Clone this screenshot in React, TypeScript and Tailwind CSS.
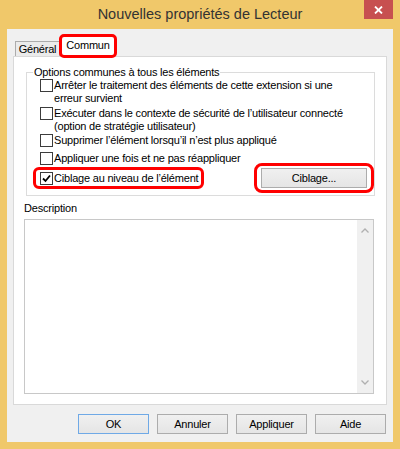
import React from 'react';

function Box({ checked = false }: { checked?: boolean }) {
  return (
    <span className="shrink-0 w-[13px] h-[13px] border border-[#3c3c3c] bg-white flex items-center justify-center">
      {checked && (
        <svg width="9" height="9" viewBox="0 0 9 9">
          <path d="M1 4.5 L3.5 7 L8 1.5" fill="none" stroke="#000" strokeWidth="1.8" />
        </svg>
      )}
    </span>
  );
}

function Btn({ label, primary = false }: { label: string; primary?: boolean }) {
  return (
    <div
      className={
        'w-[71px] h-[20px] flex items-center justify-center bg-gradient-to-b from-[#F0F0F0] to-[#E5E5E5] border ' +
        (primary ? 'border-[#6FA9E6]' : 'border-[#ACACAC]')
      }
    >
      {label}
    </div>
  );
}

export default function App() {
  return (
    <div className="w-[400px] h-[449px] bg-[#F0C86A] flex flex-col font-['Liberation_Sans',sans-serif] text-[11px] tracking-[-0.2px] text-black leading-[13px]">
      {/* title bar */}
      <div className="relative h-[29px] flex items-center justify-center text-[14.5px] tracking-normal text-[#333]">
        Nouvelles propriétés de Lecteur
        <div className="absolute right-[7px] top-0 w-[29px] h-[19px] bg-[#C75050] flex items-center justify-center">
          <svg width="9" height="8" viewBox="0 0 9 8">
            <path d="M1 0.5 L8 7.5 M8 0.5 L1 7.5" stroke="#fff" strokeWidth="1.8" />
          </svg>
        </div>
      </div>

      {/* client area */}
      <div className="mx-[7px] h-[413px] bg-[#F0F0F0] flex flex-col px-[6px] pt-[4px]">
        {/* tabs */}
        <div className="h-[23px] flex items-end pl-[2px]">
          <div className="w-[45px] h-[15px] border border-b-0 border-[#ACACAC] bg-[#EBEBEB] flex items-center justify-center">
            Général
          </div>
          <div className="relative z-10 w-[56px] h-[22px] -mb-[1px] border border-b-0 border-[#ACACAC] bg-white flex items-center justify-center pb-[2px] outline-[3px] outline-solid outline-[#FF0000] -outline-offset-2 rounded-[4px]">
            Commun
          </div>
        </div>

        {/* panel */}
        <div className="h-[349px] bg-white border border-[#D9D9D9] flex flex-col">
          <fieldset className="ml-[12px] mt-[8px] w-[349px] border border-[#DCDCDC] pb-[5px] pr-[3px]">
            <legend className="ml-[6px] px-[1px] leading-[14px]">Options communes à tous les éléments</legend>
            <div className="flex items-start gap-[1px] pl-[13px]">
              <Box />
              <span className="whitespace-nowrap">
                Arrêter le traitement des éléments de cette extension si une
                <br />
                erreur survient
              </span>
            </div>
            <div className="flex items-start gap-[1px] pl-[13px] mt-[2px]">
              <Box />
              <span className="whitespace-nowrap">
                Exécuter dans le contexte de sécurité de l’utilisateur connecté
                <br />
                (option de stratégie utilisateur)
              </span>
            </div>
            <div className="flex items-start gap-[1px] pl-[13px] mt-[1px]">
              <Box />
              <span>Supprimer l’élément lorsqu’il n’est plus appliqué</span>
            </div>
            <div className="flex items-start gap-[1px] pl-[13px] mt-[5px]">
              <Box />
              <span>Appliquer une fois et ne pas réappliquer</span>
            </div>
            <div className="flex items-center pl-[7px] mt-[1px]">
              <div className="w-[169px] h-[20px] pl-[6px] flex items-center gap-[1px] outline-[3px] outline-solid outline-[#FF0000] -outline-offset-2 rounded-[5px]">
                <Box checked />
                <span className="whitespace-nowrap">Ciblage au niveau de l’élément</span>
              </div>
              <div className="ml-auto px-[4px] py-[2px] outline-[3px] outline-solid outline-[#FF0000] rounded-[5px]">
                <div className="w-[106px] h-[20px] flex items-center justify-center bg-gradient-to-b from-[#F0F0F0] to-[#E5E5E5] border border-[#ACACAC]">
                  Ciblage...
                </div>
              </div>
            </div>
          </fieldset>

          <div className="ml-[10px] mt-[5px] leading-[14px]">Description</div>
          <div className="ml-[10px] mt-[4px] w-[350px] h-[175px] border border-[#C8C8C8] flex justify-end">
            <div className="w-[16px] h-full bg-[#F0F0F0] flex flex-col items-center justify-between py-[8px]">
              <svg width="8" height="5" viewBox="0 0 8 5">
                <path d="M0.5 4.5 L4 1 L7.5 4.5" fill="none" stroke="#B0B0B0" strokeWidth="1.3" />
              </svg>
              <svg width="8" height="5" viewBox="0 0 8 5">
                <path d="M0.5 0.5 L4 4 L7.5 0.5" fill="none" stroke="#B0B0B0" strokeWidth="1.3" />
              </svg>
            </div>
          </div>
        </div>

        {/* buttons */}
        <div className="mt-[9px] flex justify-end gap-[8px] mr-[1px]">
          <Btn label="OK" primary />
          <Btn label="Annuler" />
          <Btn label="Appliquer" />
          <Btn label="Aide" />
        </div>
      </div>
    </div>
  );
}
